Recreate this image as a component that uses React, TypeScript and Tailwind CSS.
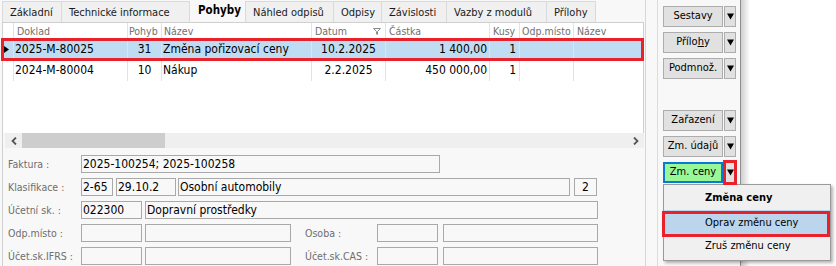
import React from "react"

const tabs = [
  { label: "Základní", w: "w-[60px]" },
  { label: "Technické informace", w: "w-[129px]" },
  { label: "Pohyby", w: "w-[56px]", active: true },
  { label: "Náhled odpisů", w: "w-[89px]" },
  { label: "Odpisy", w: "w-[49px]" },
  { label: "Závislosti", w: "w-[66px]" },
  { label: "Vazby z modulů", w: "w-[101px]" },
  { label: "Přílohy", w: "w-[50px]" },
]

const rows = [
  { sel: true, doklad: "2025-M-80025", pohyb: "31", nazev: "Změna pořizovací ceny", datum: "10.2.2025", castka: "1 400,00", kusy: "1" },
  { sel: false, doklad: "2024-M-80004", pohyb: "10", nazev: "Nákup", datum: "2.2.2025", castka: "450 000,00", kusy: "1" },
]

const cols = "grid grid-cols-[11px_114px_34px_150px_74px_104px_30px_54px_1fr]"
const cell = "border-r border-[#e3e3e3] whitespace-nowrap overflow-hidden"

function DownTri() {
  return (
    <svg width="7" height="7" viewBox="0 0 7 7">
      <path d="M0 0.5 H7 L3.5 6.5 Z" fill="#000" />
    </svg>
  )
}

function Funnel() {
  return (
    <svg width="8" height="7" viewBox="0 0 8 7">
      <path d="M0.5 0.5 H7.5 L4.5 3.5 V6.5 L3.5 6 V3.5 Z" fill="none" stroke="#8a8a8a" strokeWidth="1" />
    </svg>
  )
}

function Box({ w, children, center }: { w: string; children?: React.ReactNode; center?: boolean }) {
  return (
    <div className={`${w} h-[18px] border border-[#a9a9a9] bg-[#f8f8f8] text-[12px] text-black leading-[16px] whitespace-nowrap overflow-hidden ${center ? "text-center" : "pl-[1px]"}`}>
      {children}
    </div>
  )
}

function Label({ w, children }: { w: string; children: React.ReactNode }) {
  return <div className={`${w} shrink-0 text-[10.5px] text-[#6e6e6e] leading-[18px] whitespace-nowrap`}>{children}</div>
}

function Btn({ label, green }: { label: React.ReactNode; green?: boolean }) {
  return (
    <div className="flex gap-[1px] h-[21px]">
      <div
        className={`w-[60px] flex items-center justify-center text-[11px] text-black ${
          green ? "bg-[#98f898] border-2 border-[#0a78d7]" : "bg-[#e1e1e1] border border-[#adadad]"
        }`}
      >
        {label}
      </div>
      <div className="w-[12px] bg-[#e1e1e1] border border-[#adadad] flex items-center justify-center">
        <DownTri />
      </div>
    </div>
  )
}

export default function App() {
  return (
    <div className="relative w-[836px] h-[266px] overflow-hidden bg-white flex font-['DejaVu_Sans_Condensed','Liberation_Sans',sans-serif]">
      {/* left part */}
      <div className="w-[646px] h-full bg-[#f8f8f8] border-r border-[#d6d6d6] flex flex-col">
        {/* tabs */}
        <div className="h-[22px] flex items-end pl-[2px]">
          {tabs.map((t) =>
            t.active ? (
              <div key={t.label} className={`${t.w} h-[22px] pl-[8px] pt-[2px] text-[11.5px] font-bold text-black`}>
                {t.label}
              </div>
            ) : (
              <div
                key={t.label}
                className={`${t.w} h-[21px] pl-[7px] pt-[3px] bg-[#f0f0f0] border border-b-0 border-[#dadada] -ml-[1px] first:ml-0 text-[11px] text-[#1a1a1a] whitespace-nowrap`}
              >
                {t.label}
              </div>
            )
          )}
        </div>

        <div className="flex-1 flex flex-col ml-[2px] border-l border-[#d0d0d0]">
          {/* grid */}
          <div className="h-[111px] bg-white border-t border-r border-[#cfcfcf] mr-[1px]">
            <div className={`${cols} h-[16px] text-[10.5px] text-[#707070] leading-[16px]`}>
              <div className={cell} />
              <div className={`${cell} pl-[3px]`}>Doklad</div>
              <div className={`${cell} pl-[1px]`}>Pohyb</div>
              <div className={`${cell} pl-[2px]`}>Název</div>
              <div className={`${cell} pl-[3px] pr-[4px] flex items-center justify-between`}>
                <span>Datum</span>
                <Funnel />
              </div>
              <div className={`${cell} pl-[3px]`}>Částka</div>
              <div className={`${cell} pl-[3px]`}>Kusy</div>
              <div className={`${cell} pl-[2px]`}>Odp.místo</div>
              <div className="pl-[3px] whitespace-nowrap">Název</div>
            </div>
            {rows.map((r) => (
              <div key={r.doklad} className={`${cols} h-[21px] text-[12px] text-black leading-[21px] ${r.sel ? "bg-[#c0dcf3]" : ""}`}>
                <div className={`${cell} flex items-center pl-[1px]`}>
                  {r.sel && (
                    <svg width="5" height="7" viewBox="0 0 5 7">
                      <path d="M0 0 L5 3.5 L0 7 Z" fill="#000" />
                    </svg>
                  )}
                </div>
                <div className={`${cell} pl-[1px]`}>{r.doklad}</div>
                <div className={`${cell} text-center`}>{r.pohyb}</div>
                <div className={`${cell} pl-[1px]`}>{r.nazev}</div>
                <div className={`${cell} text-center`}>{r.datum}</div>
                <div className={`${cell} text-right pr-[2px]`}>{r.castka}</div>
                <div className={`${cell} text-right pr-[3px]`}>{r.kusy}</div>
                <div className={cell} />
                <div />
              </div>
            ))}
          </div>

          {/* horizontal scrollbar */}
          <div className="h-[15px] ml-[2px] mr-[1px] bg-[#efefef] flex items-center">
            <div className="w-[17px] flex justify-center">
              <svg width="6" height="8" viewBox="0 0 6 8">
                <path d="M5 0.5 L1.5 4 L5 7.5" fill="none" stroke="#555" strokeWidth="1.8" />
              </svg>
            </div>
            <div className="w-[143px] h-[15px] bg-[#cdcdcd]" />
            <div className="flex-1" />
            <div className="w-[17px] flex justify-center">
              <svg width="6" height="8" viewBox="0 0 6 8">
                <path d="M1 0.5 L4.5 4 L1 7.5" fill="none" stroke="#555" strokeWidth="1.8" />
              </svg>
            </div>
          </div>

          {/* form */}
          <div className="flex flex-col gap-[5px] pt-[7px] pl-[5px]">
            <div className="flex">
              <Label w="w-[73px]">Faktura :</Label>
              <Box w="w-[359px]">2025-100254; 2025-100258</Box>
            </div>
            <div className="flex">
              <Label w="w-[73px]">Klasifikace :</Label>
              <Box w="w-[32px]">2-65</Box>
              <div className="w-[3px]" />
              <Box w="w-[60px]">29.10.2</Box>
              <div className="w-[2px]" />
              <Box w="w-[392px]">Osobní automobily</Box>
              <div className="w-[4px]" />
              <Box w="w-[23px]" center>
                2
              </Box>
            </div>
            <div className="flex">
              <Label w="w-[73px]">Účetní sk. :</Label>
              <Box w="w-[61px]">022300</Box>
              <div className="w-[3px]" />
              <Box w="w-[453px]">Dopravní prostředky</Box>
            </div>
            <div className="flex">
              <Label w="w-[73px]">Odp.místo :</Label>
              <Box w="w-[61px]" />
              <div className="w-[3px]" />
              <Box w="w-[146px]" />
              <div className="w-[14px]" />
              <Label w="w-[72px]">Osoba :</Label>
              <Box w="w-[61px]" />
              <div className="w-[5px]" />
              <Box w="w-[155px]" />
            </div>
            <div className="flex">
              <Label w="w-[73px]">Účet.sk.IFRS :</Label>
              <Box w="w-[61px]" />
              <div className="w-[3px]" />
              <Box w="w-[146px]" />
              <div className="w-[14px]" />
              <Label w="w-[72px]">Účet.sk.CAS :</Label>
              <Box w="w-[61px]" />
              <div className="w-[5px]" />
              <Box w="w-[155px]" />
            </div>
          </div>
        </div>
      </div>

      {/* gap between panels */}
      <div className="w-[11px] h-full bg-[#f8f8f8]" />

      {/* right button panel */}
      <div className="w-[84px] h-full bg-[#f8f8f8] border-l border-r border-l-[#dcdcdc] border-r-[#8f8f8f] pl-[5px] pt-[6px] flex flex-col">
        <div className="flex flex-col gap-[5px]">
          <Btn label="Sestavy" />
          <Btn
            label={
              <span>
                Přílo<span className="underline">h</span>y
              </span>
            }
          />
          <Btn label="Podmnož." />
        </div>
        <div className="flex flex-col gap-[5px] mt-[31px]">
          <Btn label="Zařazení" />
          <Btn label="Zm. údajů" />
          <Btn label="Zm. ceny" green />
        </div>
      </div>
      <div className="w-[9px] h-full bg-gradient-to-r from-[#cfcfcf] to-white" />

      {/* dropdown menu */}
      <div className="absolute left-[663px] top-[184px] w-[168px] h-[77px] bg-[#f0f0f0] border border-[#9a9a9a] shadow-[2px_2px_3px_rgba(0,0,0,0.3)] flex flex-col text-[11px] text-black">
        <div className="h-[25px] pl-[41px] leading-[25px] font-bold">Změna ceny</div>
        <div className="h-[25px] pl-[41px] leading-[25px] bg-[#bad5ec]">Oprav změnu ceny</div>
        <div className="h-[22px] pl-[41px] leading-[22px]">Zruš změnu ceny</div>
      </div>

      {/* red highlight marks */}
      <div className="absolute left-[1px] top-[38px] w-[643px] h-[23px] border-[3px] border-[#e8212b]" />
      <div className="absolute left-[723px] top-[160px] w-[14px] h-[25px] border-[3px] border-[#e8212b]" />
      <div className="absolute left-[662px] top-[211px] w-[168px] h-[26px] border-[3px] border-[#e8212b]" />
    </div>
  )
}
